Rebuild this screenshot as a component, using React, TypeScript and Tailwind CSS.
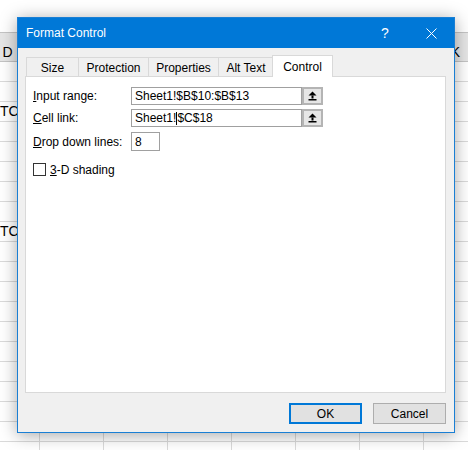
import React from "react";

const COLS = ["D", "E", "F", "G", "H", "I", "J", "K"];

function UpArrow() {
  return (
    <svg width="9" height="10" viewBox="0 0 9 10">
      <polygon points="4.5,0.5 8.5,4.5 0.5,4.5" fill="#000" />
      <rect x="3.5" y="4.5" width="2" height="3" fill="#000" />
      <rect x="0.5" y="8" width="8" height="1.5" fill="#000" />
    </svg>
  );
}

export default function App() {
  const rows = Array.from({ length: 20 });
  return (
    <div
      className="relative w-[468px] h-[450px] overflow-hidden bg-white text-black"
      style={{ fontFamily: '"Liberation Sans", Arial, sans-serif' }}
    >
      {/* spreadsheet background */}
      <div className="flex flex-col">
        <div className="h-[32px] bg-white" />
        <div className="flex h-[30px] -ml-[24px] border-t border-b border-[#c4c4c4] bg-[#e6e6e6]">
          {COLS.map((c) => (
            <div
              key={c}
              className="w-[64px] shrink-0 border-r border-[#cfcfcf] flex items-center justify-center pt-[9px] text-[14px] leading-none"
            >
              {c}
            </div>
          ))}
        </div>
        {rows.map((_, i) => (
          <div key={i} className="flex h-[20px] -ml-[24px] border-b border-[#dadada]">
            {COLS.map((c, j) => (
              <div
                key={c}
                className="w-[64px] shrink-0 border-r border-[#dadada] flex items-center text-[14px] pl-[24px]"
              >
                {j === 0 && (i === 2 || i === 8) ? "TC" : ""}
              </div>
            ))}
          </div>
        ))}
      </div>

      {/* dialog */}
      <div className="absolute left-[17px] top-[17px] w-[438px] h-[416px] border border-[#1a7fd4] bg-[#f0f0f0] flex flex-col shadow-[0_2px_16px_rgba(0,0,0,0.35)]">
        <div className="h-[30px] bg-[#0078d7] flex items-center text-white">
          <div className="pl-[8px] text-[12px]">Format Control</div>
          <div className="ml-auto flex h-full">
            <div className="w-[46px] h-full flex items-center justify-center text-[14px]">?</div>
            <div className="w-[46px] h-full flex items-center justify-center">
              <svg width="11" height="11" viewBox="0 0 11 11">
                <path d="M0.5 0.5 L10.5 10.5 M10.5 0.5 L0.5 10.5" stroke="#fff" strokeWidth="1" />
              </svg>
            </div>
          </div>
        </div>

        {/* tabs */}
        <div className="mt-[7px] ml-[8px] h-[21px] flex items-end text-[12px] relative z-10">
          <div className="w-[52px] h-[19px] border-t border-l border-[#d9d9d9] flex items-center justify-center pt-[1px]">Size</div>
          <div className="w-[70px] h-[19px] border-t border-l border-[#d9d9d9] flex items-center justify-center pt-[1px]">Protection</div>
          <div className="w-[70px] h-[19px] border-t border-l border-[#d9d9d9] flex items-center justify-center pt-[1px]">Properties</div>
          <div className="w-[55px] h-[19px] border-t border-l border-[#d9d9d9] flex items-center justify-center pt-[1px]">Alt Text</div>
          <div className="w-[61px] h-[22px] -ml-[1px] -mb-[1px] border-t border-l border-r border-[#d9d9d9] bg-white flex items-center justify-center">Control</div>
        </div>

        {/* panel */}
        <div className="ml-[7px] w-[421px] h-[317px] border border-[#d9d9d9] bg-white pt-[10px] pl-[7px] text-[12px]">
          <div className="flex items-center h-[18px]">
            <div className="w-[98px]"><span className="underline">I</span>nput range:</div>
            <div className="w-[171px] h-[18px] border border-[#a0a0a0] flex items-center pl-[3px]">Sheet1!$B$10:$B$13</div>
            <div className="w-[21px] h-[18px] border-2 border-[#b4b4b4] bg-[#e6e6e6] flex items-center justify-center">
              <UpArrow />
            </div>
          </div>
          <div className="flex items-center h-[18px] mt-[4px]">
            <div className="w-[98px]"><span className="underline">C</span>ell link:</div>
            <div className="w-[171px] h-[18px] border border-[#a0a0a0] flex items-center pl-[3px]">
              Sheet1!<span className="inline-block w-[1px] h-[13px] bg-black" />$C$18
            </div>
            <div className="w-[21px] h-[18px] border-2 border-[#b4b4b4] bg-[#e6e6e6] flex items-center justify-center">
              <UpArrow />
            </div>
          </div>
          <div className="flex items-center h-[19px] mt-[5px]">
            <div className="w-[98px]"><span className="underline">D</span>rop down lines:</div>
            <div className="w-[29px] h-[19px] border border-[#a0a0a0] flex items-center pl-[3px]">8</div>
          </div>
          <div className="flex items-center h-[13px] mt-[12px]">
            <div className="w-[13px] h-[13px] border border-[#333333] bg-white" />
            <div className="ml-[4px]"><span className="underline">3</span>-D shading</div>
          </div>
        </div>

        {/* buttons */}
        <div className="mt-[10px] mr-[8px] flex justify-end gap-[11px] text-[12px]">
          <div className="w-[73px] h-[21px] border-2 border-[#0078d7] bg-[#e1e1e1] flex items-center justify-center">OK</div>
          <div className="w-[73px] h-[21px] border border-[#adadad] bg-[#e1e1e1] flex items-center justify-center">Cancel</div>
        </div>
      </div>
    </div>
  );
}
